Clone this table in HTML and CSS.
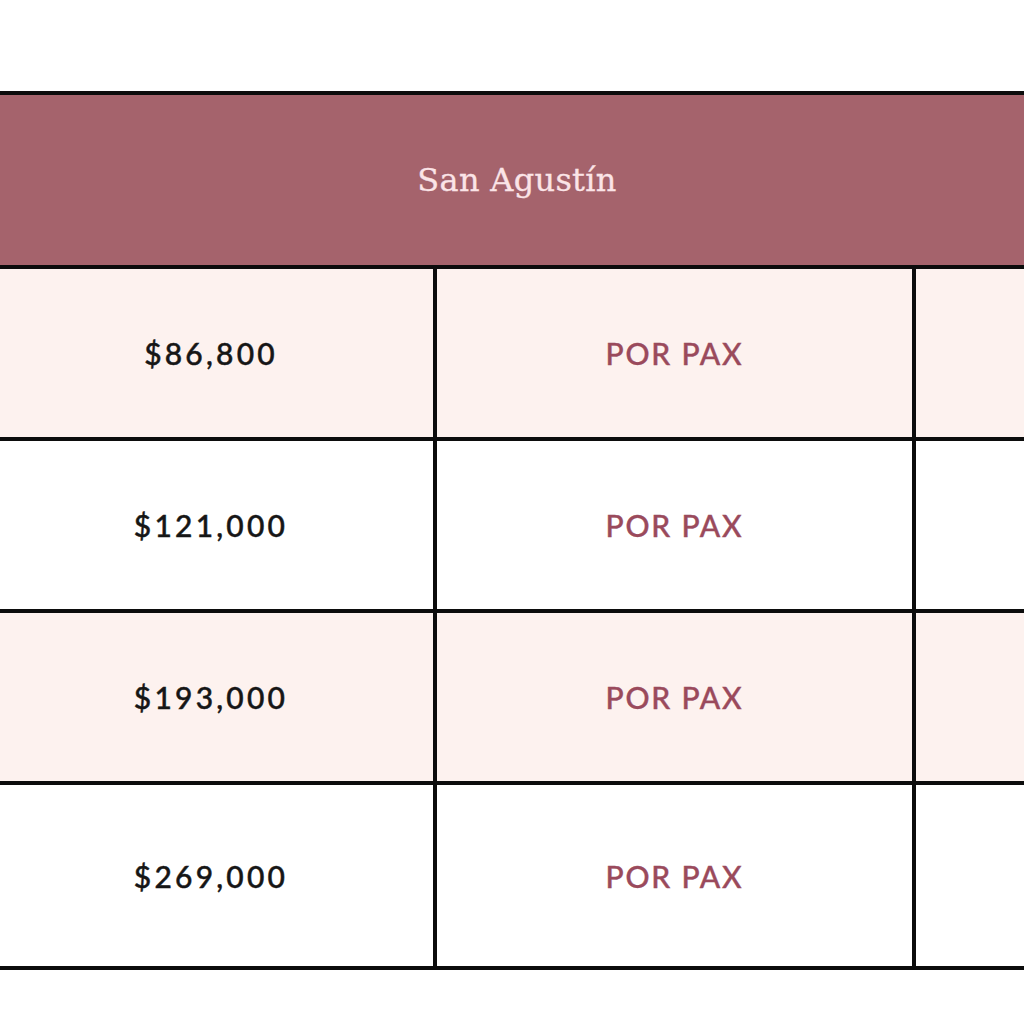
FILE: index.html
```html
<!DOCTYPE html>
<html lang="es">
<head>
<meta charset="utf-8">
<title>Tarifas San Agustín</title>
<link rel="stylesheet" href="styles.css">
</head>
<body>
<div class="frame">
  <table class="rates">
    <colgroup>
      <col class="c1">
      <col class="c2">
      <col class="c3">
    </colgroup>
    <thead>
      <tr><th colspan="3" class="title">San Agustín</th></tr>
    </thead>
    <tbody>
      <tr class="tint"><td class="price">$86,800</td><td class="unit">POR PAX</td><td></td></tr>
      <tr><td class="price">$121,000</td><td class="unit">POR PAX</td><td></td></tr>
      <tr class="tint"><td class="price">$193,000</td><td class="unit">POR PAX</td><td></td></tr>
      <tr class="last"><td class="price">$269,000</td><td class="unit">POR PAX</td><td></td></tr>
    </tbody>
  </table>
</div>
</body>
</html>
```
FILE: styles.css
```css
html, body {
  margin: 0;
  padding: 0;
  background: #ffffff;
}
body {
  width: 1024px;
  height: 1024px;
  overflow: hidden;
}
.frame {
  padding-top: 91px;
  margin-left: -15px;
}
.rates {
  border-collapse: collapse;
  table-layout: fixed;
  width: 1060px;
}
.c1 { width: 448px; }
.c2 { width: 479px; }
.c3 { width: 133px; }
.rates th, .rates td {
  border: 4px solid #0c0c0c;
  padding: 0;
  text-align: center;
  vertical-align: middle;
}
.title {
  height: 170px;
  background: #a5636c;
  color: #fbe4e7;
  font-family: "DejaVu Serif", "Liberation Serif", serif;
  font-weight: normal;
  font-size: 32px;
  letter-spacing: 0.3px;
  -webkit-text-stroke: 0.3px #fbe4e7;
}
.rates tbody tr td { height: 168px; }
.rates tbody tr.last td { height: 181px; }
.tint td { background: #fdf2ef; }
.price {
  font-family: "Lato", "Open Sans", sans-serif;
  font-weight: 500;
  font-size: 30px;
  color: #161616;
  letter-spacing: 3.2px;
  padding-left: 4px;
  -webkit-text-stroke: 0.45px #161616;
}
.unit {
  font-family: "Lato", "Open Sans", sans-serif;
  font-weight: 500;
  font-size: 30px;
  color: #9a4a5c;
  letter-spacing: 1.8px;
  -webkit-text-stroke: 0.4px #9a4a5c;
}
```
